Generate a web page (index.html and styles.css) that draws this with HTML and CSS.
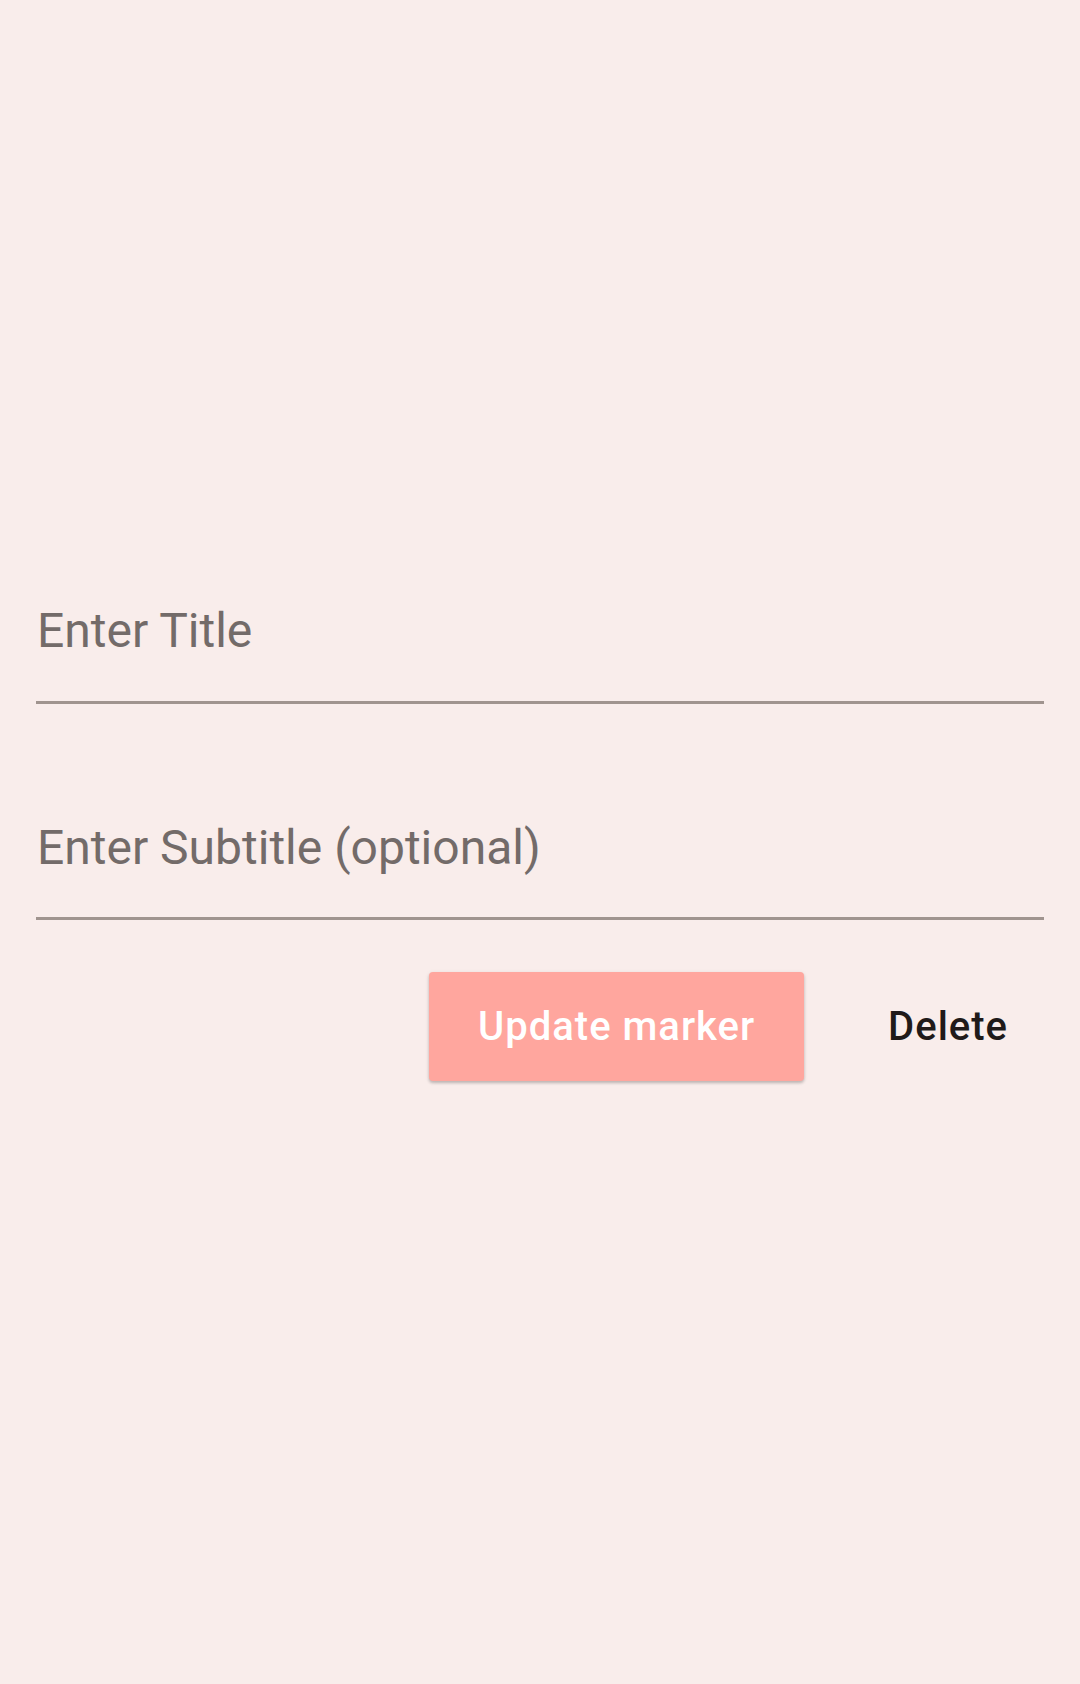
FILE: index.html
```html
<!DOCTYPE html>
<html lang="en">
<head>
<meta charset="utf-8">
<title>Edit marker</title>
<link rel="stylesheet" href="styles.css">
</head>
<body>
<main class="page">
  <div class="field field-title">
    <span class="placeholder">Enter Title</span>
  </div>
  <div class="field field-subtitle">
    <span class="placeholder">Enter Subtitle (optional)</span>
  </div>
  <div class="actions">
    <button class="btn btn-filled">Update marker</button>
    <button class="btn btn-text">Delete</button>
  </div>
</main>
</body>
</html>
```
FILE: styles.css
```css
html, body {
  margin: 0;
  padding: 0;
  background: #f9edeb;
  width: 1080px;
  height: 1684px;
  overflow: hidden;
}

.page {
  padding: 0 36px;
  font-family: Roboto, "Noto Sans", sans-serif;
}

.field {
  border-bottom: 3px solid #a0948f;
  padding-bottom: 42px;
}

.field-title {
  margin-top: 603px;
}

.field-subtitle {
  margin-top: 116px;
  padding-bottom: 41px;
}

.placeholder {
  display: block;
  font-size: 48px;
  line-height: 56px;
  color: #736b69;
  padding-left: 1px;
}

.actions {
  display: flex;
  justify-content: flex-end;
  align-items: center;
  margin-top: 52px;
}

.btn {
  font-family: Roboto, "Noto Sans", sans-serif;
  font-weight: 500;
  font-size: 40px;
  letter-spacing: 1px;
  border: none;
  cursor: pointer;
  height: 109px;
  padding: 0;
  display: flex;
  align-items: center;
  justify-content: center;
}

.btn-filled {
  width: 375px;
  background: #ffa69e;
  color: #ffffff;
  border-radius: 4px;
  box-shadow: 0 2px 3px rgba(0, 0, 0, 0.2), 0 1px 5px rgba(0, 0, 0, 0.08);
}

.btn-text {
  background: transparent;
  color: #201a19;
  padding: 0 36px 0 38px;
  margin-left: 46px;
}
```
